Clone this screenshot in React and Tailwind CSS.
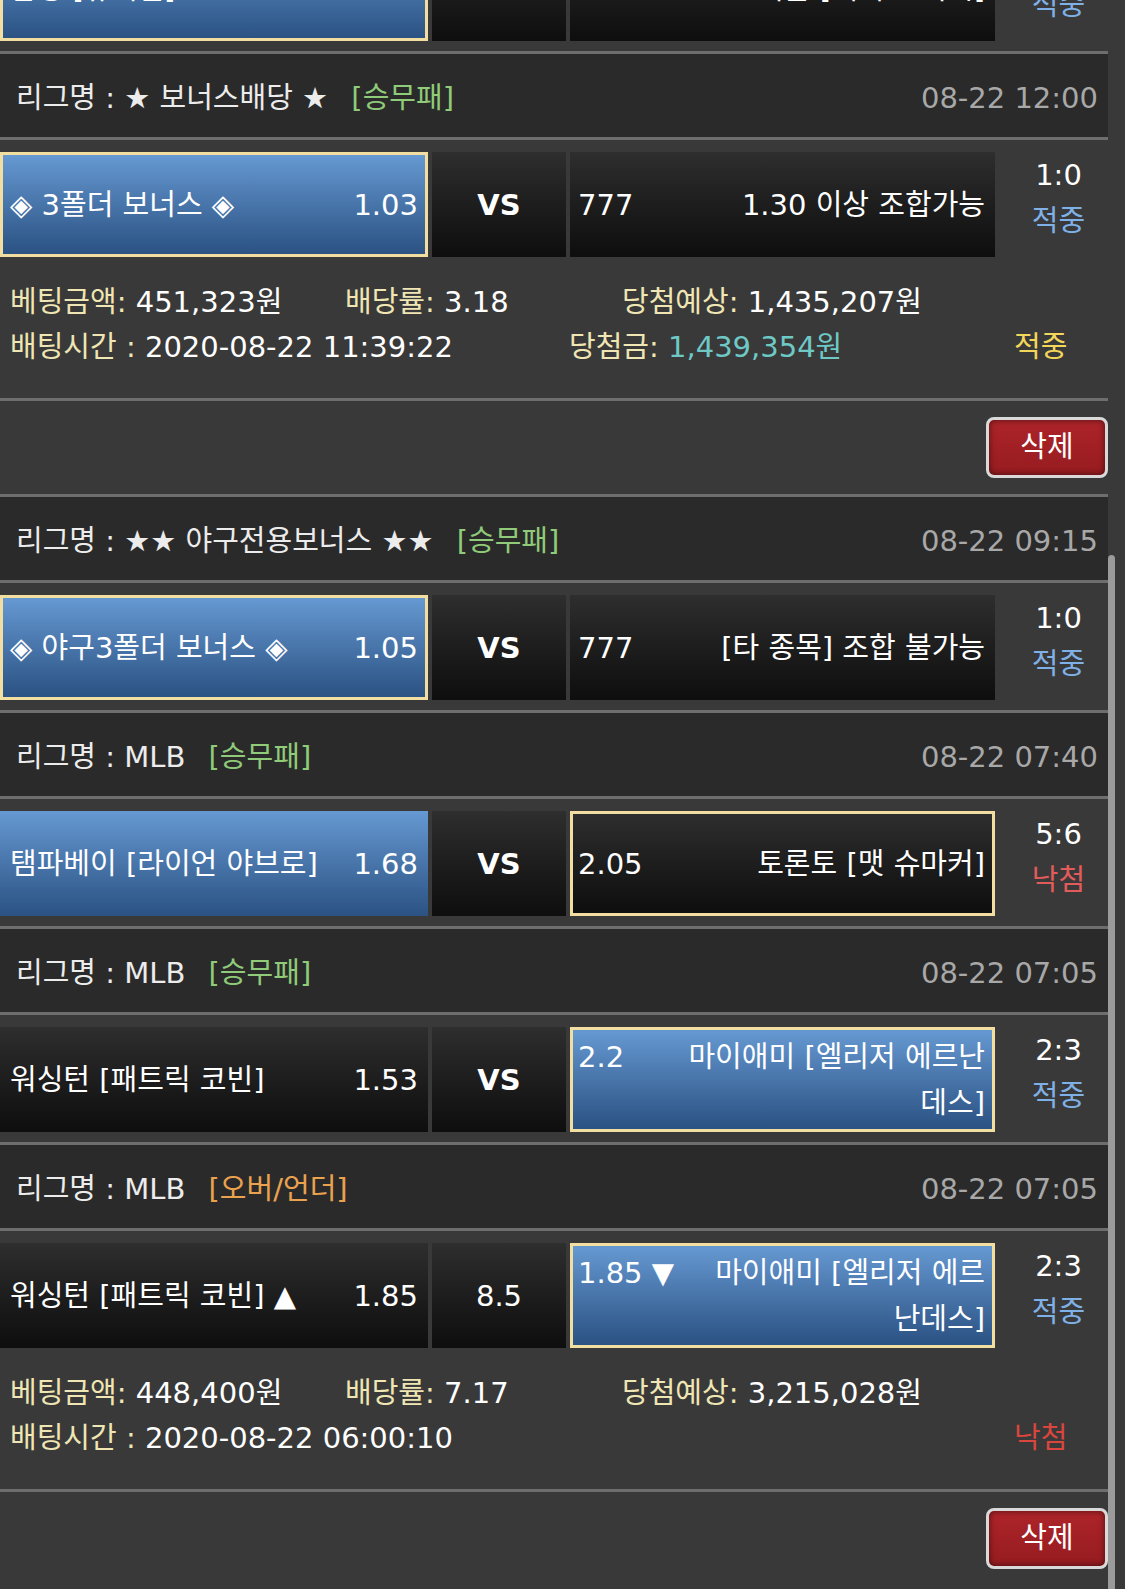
import clsx from "clsx";

const FONT = "font-['DejaVu_Sans','Noto_Sans_CJK_KR',sans-serif]";

function Line() {
  return <div className="h-[3px] bg-[#6e6e6e]" />;
}

function Header({ league, type, typeColor = "text-[#8fcb78]", date }) {
  return (
    <div className="flex h-[83px] items-center justify-between bg-[#2a2a2a] pt-[6px] pl-[16px] pr-[10px] text-[29px]">
      <span className="text-[#ececec]">
        리그명 : {league} <span className={clsx("ml-[14px]", typeColor)}>{type}</span>
      </span>
      <span className="text-[#a8a8a8]">{date}</span>
    </div>
  );
}

function Cell({ blue, pick, className = "", children }) {
  return (
    <div
      className={clsx(
        "flex h-[105px] items-center text-[29px] leading-[46px] text-white",
        blue
          ? "bg-linear-to-b from-[#6699d2] to-[#2b5283]"
          : "bg-linear-to-b from-[#2e2e2e] to-[#0e0e0e]",
        pick && "border-[3px] border-[#f3dea1]",
        className
      )}
    >
      {children}
    </div>
  );
}

function BetRow({ home, away, mid = "VS", score, result, className = "" }) {
  return (
    <div className={clsx("flex items-start gap-[4px] pt-[12px] pb-[10px]", className)}>
      <Cell
        blue={home.blue}
        pick={home.pick}
        className={clsx("w-[428px] justify-between", home.pick ? "px-[7px]" : "px-[10px]")}
      >
        <span>{home.name}</span>
        <span className="shrink-0 pl-[8px]">{home.odds}</span>
      </Cell>
      <Cell className={clsx("w-[134px] justify-center", mid === "VS" && "font-bold")}>{mid}</Cell>
      <Cell
        blue={away.blue}
        pick={away.pick}
        className={clsx("w-[425px]", away.pick ? "pl-[5px] pr-[7px]" : "pl-[8px] pr-[10px]")}
      >
        <div className="flex w-full items-start">
          <span className="mr-[24px] min-w-[72px] shrink-0">{away.odds}</span>
          <span className="flex-1 text-right">{away.name}</span>
        </div>
      </Cell>
      <div className="flex flex-1 flex-col items-center pl-[10px] text-[29px] leading-[46px]">
        <span className="text-white">{score}</span>
        <span className={result === "적중" ? "text-[#7fb0e6]" : "text-[#e25b5b]"}>{result}</span>
      </div>
    </div>
  );
}

function Label({ children }) {
  return <span className="text-[#efe6b4]">{children}</span>;
}

function Info({ amount, rate, expect, time, prize, result }) {
  return (
    <div className="pt-[13px] pb-[28px] pl-[10px] text-[29px] leading-[45px] text-white">
      <div className="flex">
        <span className="w-[335px]">
          <Label>베팅금액:</Label> {amount}
        </span>
        <span className="w-[277px]">
          <Label>배당률:</Label> {rate}
        </span>
        <span>
          <Label>당첨예상:</Label> {expect}
        </span>
      </div>
      <div className="flex">
        <span className="w-[559px]">
          <Label>배팅시간 :</Label> {time}
        </span>
        <span className="w-[445px]">
          {prize && (
            <>
              <Label>당첨금:</Label> <span className="text-[#6ec9c6]">{prize}</span>
            </>
          )}
        </span>
        <span className={result === "적중" ? "text-[#f2d75a]" : "text-[#d9463e]"}>{result}</span>
      </div>
    </div>
  );
}

function DeleteBar() {
  return (
    <div className="flex justify-end py-[16px]">
      <button className="h-[61px] w-[122px] rounded-[8px] border-[3px] border-[#d9d9d9] bg-linear-to-b from-[#ad2429] to-[#961c20] text-[29px] text-white shadow-[inset_0_0_6px_rgba(0,0,0,0.55)]">
        삭제
      </button>
    </div>
  );
}

export default function App() {
  return (
    <div className={clsx("relative min-h-[1589px] w-[1125px] overflow-hidden bg-[#393939]", FONT)}>
      <div className="w-[1108px]">
        <BetRow
          className="-mt-[76px]"
          home={{ name: "삼성 [뷰캐넌]", odds: "1.75", blue: true, pick: true }}
          away={{ name: "키움 [에릭 요키시]", odds: "1.95" }}
          score="3:1"
          result="적중"
        />
        <Line />
        <Header league="★ 보너스배당 ★" type="[승무패]" date="08-22 12:00" />
        <Line />
        <BetRow
          home={{ name: "◈ 3폴더 보너스 ◈", odds: "1.03", blue: true, pick: true }}
          away={{ name: "1.30 이상 조합가능", odds: "777" }}
          score="1:0"
          result="적중"
        />
        <Info
          amount="451,323원"
          rate="3.18"
          expect="1,435,207원"
          time="2020-08-22 11:39:22"
          prize="1,439,354원"
          result="적중"
        />
        <Line />
        <DeleteBar />
        <Line />
        <Header league="★★ 야구전용보너스 ★★" type="[승무패]" date="08-22 09:15" />
        <Line />
        <BetRow
          home={{ name: "◈ 야구3폴더 보너스 ◈", odds: "1.05", blue: true, pick: true }}
          away={{ name: "[타 종목] 조합 불가능", odds: "777" }}
          score="1:0"
          result="적중"
        />
        <Line />
        <Header league="MLB" type="[승무패]" date="08-22 07:40" />
        <Line />
        <BetRow
          home={{ name: "탬파베이 [라이언 야브로]", odds: "1.68", blue: true }}
          away={{ name: "토론토 [맷 슈마커]", odds: "2.05", pick: true }}
          score="5:6"
          result="낙첨"
        />
        <Line />
        <Header league="MLB" type="[승무패]" date="08-22 07:05" />
        <Line />
        <BetRow
          home={{ name: "워싱턴 [패트릭 코빈]", odds: "1.53" }}
          away={{ name: "마이애미 [엘리저 에르난데스]", odds: "2.2", blue: true, pick: true }}
          score="2:3"
          result="적중"
        />
        <Line />
        <Header league="MLB" type="[오버/언더]" typeColor="text-[#eaa24f]" date="08-22 07:05" />
        <Line />
        <BetRow
          home={{ name: "워싱턴 [패트릭 코빈] ▲", odds: "1.85" }}
          mid="8.5"
          away={{ name: "마이애미 [엘리저 에르난데스]", odds: "1.85 ▼", blue: true, pick: true }}
          score="2:3"
          result="적중"
        />
        <Info
          amount="448,400원"
          rate="7.17"
          expect="3,215,028원"
          time="2020-08-22 06:00:10"
          result="낙첨"
        />
        <Line />
        <DeleteBar />
      </div>
      <div className="absolute left-[1108px] top-[555px] h-[1100px] w-[7px] rounded-full bg-[#9b9b9b]" />
    </div>
  );
}
